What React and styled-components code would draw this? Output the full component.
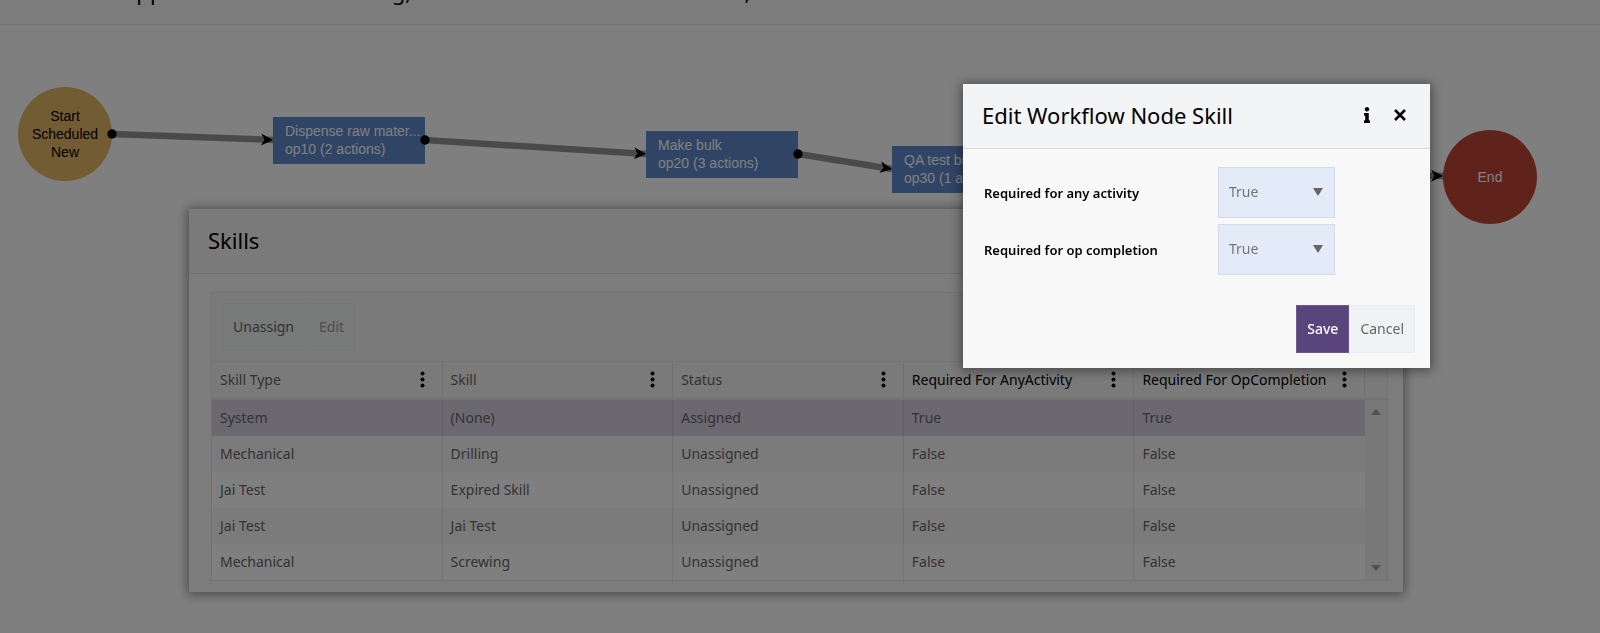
import React from "react";
import styled, { createGlobalStyle } from "styled-components";
import { FaInfo } from "react-icons/fa";

const GlobalStyle = createGlobalStyle`
  * {
    box-sizing: border-box;
  }
  body {
    margin: 0;
    background-color: #ffffff;
    font-family: "Noto Sans", "Open Sans", sans-serif;
    font-size: 14px;
    color: #666666;
  }
  button,
  select {
    font-family: inherit;
  }
`;

const Page = styled.div`
  position: relative;
  display: flex;
  flex-direction: column;
  min-height: 100vh;
  overflow: hidden;
`;

const StatusBar = styled.header`
  display: flex;
  align-items: flex-end;
  height: 25px;
  padding-bottom: 17px;
  background-color: #f8f8f8;
  border-bottom: 1px solid #e6e6e6;
  overflow: hidden;
`;

const StatusText = styled.div`
  font-size: 22px;
  line-height: 32px;
  color: #000000;
  white-space: nowrap;
`;

const Canvas = styled.main`
  position: relative;
  flex: 1;
`;

const Links = styled.svg`
  position: absolute;
  top: 0;
  left: 0;
  width: 100%;
  height: 100%;
`;

const Node = styled.div`
  position: absolute;
  display: flex;
  flex-direction: column;
  justify-content: center;
  font-family: "Liberation Sans", Arial, sans-serif;
  font-size: 14px;
  line-height: 18px;
`;

const RoundNode = styled(Node)`
  align-items: center;
  width: 94px;
  height: 94px;
  border-radius: 50%;
  color: ${(props) => (props.$end ? "#ffffff" : "#000000")};
  background-color: ${(props) => (props.$end ? "#c04638" : "#e4b866")};
`;

const StepNode = styled(Node)`
  width: 152px;
  height: 47px;
  padding: 0 0 1px 12px;
  color: #ffffff;
  background-color: #608acc;
  white-space: nowrap;
`;

const Panel = styled.section`
  position: absolute;
  top: 209px;
  left: 189px;
  right: 197px;
  background-color: #f8f8f8;
  box-shadow: 0 1px 10px 2px rgba(0, 0, 0, 0.4);
`;

const TitleBar = styled.div`
  display: flex;
  align-items: center;
  justify-content: space-between;
  height: 65px;
  padding: 0 19px 2px;
  background-color: ${(props) => (props.$muted ? "#f4f4f4" : "#f3f4f6")};
  border-bottom: 1px solid ${(props) => (props.$muted ? "#e2e2e2" : "#d9dbe0")};
`;

const Title = styled.h2`
  margin: 0;
  font-size: 22px;
  line-height: 30px;
  font-weight: 400;
  color: #000000;
`;

const Grid = styled.div`
  margin: 18px 15px 11px 22px;
  border: 1px solid #e6e6e6;
  background-color: #f5f5f5;
`;

const Toolbar = styled.div`
  display: flex;
  gap: 3px;
  padding: 10px;
`;

const Button = styled.button`
  height: 48px;
  padding: 0 10px 2px;
  font-size: 14px;
  color: ${(props) => (props.$primary ? "#ffffff" : "#666666")};
  font-weight: ${(props) => (props.$primary ? 500 : 400)};
  background-color: ${(props) => (props.$primary ? "#59457c" : "#f1f2f3")};
  border: 1px solid ${(props) => (props.$primary ? "#6b5a8b" : "#ebecee")};
  &:disabled {
    color: #9a9a9a;
  }
`;

const GridBody = styled.div`
  display: flex;
  border-top: 1px solid #e9e9e9;
`;

const Table = styled.table`
  width: 100%;
  table-layout: fixed;
  border-collapse: separate;
  border-spacing: 0;
`;

const HeadCell = styled.th`
  height: 38px;
  padding: 0 17px 2px 8px;
  font-size: 14px;
  font-weight: 400;
  text-align: left;
  white-space: nowrap;
  color: ${(props) => (props.$strong ? "#000000" : "#666666")};
  border-right: 1px solid #e2e2e2;
  border-bottom: 2px solid #e2e2e2;
`;

const HeadContent = styled.div`
  display: flex;
  align-items: center;
  justify-content: space-between;
`;

const MenuButton = styled.button`
  display: flex;
  padding: 0;
  border: none;
  background: none;
`;

const Row = styled.tr`
  background-color: ${(props) => (props.$selected ? "#d6d0e0" : "#ffffff")};
  &:nth-child(even) {
    background-color: #f6f6f6;
  }
`;

const Cell = styled.td`
  height: 36px;
  padding: 0 8px 2px;
  border-right: 1px solid ${(props) => (props.$last ? "transparent" : "rgba(0, 0, 0, 0.08)")};
`;

const ScrollColumn = styled.div`
  display: flex;
  flex-direction: column;
  flex-shrink: 0;
  width: 22px;
`;

const ScrollHead = styled.div`
  height: 38px;
  border-bottom: 2px solid #e2e2e2;
`;

const ScrollTrack = styled.div`
  flex: 1;
  display: flex;
  flex-direction: column;
  align-items: center;
  justify-content: space-between;
  padding: 9px 0;
  background-color: #f1f1f1;
`;

const Backdrop = styled.div`
  position: fixed;
  inset: 0;
  background-color: rgba(0, 0, 0, 0.5);
`;

const Dialog = styled.form`
  position: absolute;
  top: 84px;
  right: 170px;
  width: 467px;
  background-color: #f8f8f8;
  box-shadow: 0 1px 10px 2px rgba(0, 0, 0, 0.4);
`;

const DialogIcons = styled.div`
  display: flex;
  align-items: center;
  gap: 19px;
  padding-right: 5px;
`;

const IconButton = styled.button`
  display: flex;
  padding: 0;
  border: none;
  background: none;
  color: #000000;
`;

const Fields = styled.div`
  display: flex;
  flex-direction: column;
  gap: 6px;
  padding: 18px 21px 0;
`;

const Field = styled.div`
  display: grid;
  grid-template-columns: 234px 117px;
  align-items: center;
`;

const Label = styled.label`
  font-size: 13px;
  font-weight: 600;
  color: #000000;
`;

const SelectWrapper = styled.div`
  position: relative;
  svg {
    position: absolute;
    top: 21px;
    right: 12px;
    pointer-events: none;
  }
`;

const Select = styled.select`
  appearance: none;
  width: 100%;
  height: 51px;
  padding: 0 10px 2px;
  font-size: 14px;
  color: #757575;
  background-color: #e4ebf8;
  border: 1px solid #d3daea;
  border-radius: 0;
`;

const Footer = styled.div`
  display: flex;
  justify-content: flex-end;
  padding: 30px 15px 15px;
`;

const steps = [
  { left: 273, top: 92, name: "Dispense raw mater...", detail: "op10 (2 actions)" },
  { left: 646, top: 106, name: "Make bulk", detail: "op20 (3 actions)" },
  { left: 892, top: 121, name: "QA test bulk", detail: "op30 (1 actions)" },
];

const links = [
  { x1: 112, y1: 109, x2: 273, y2: 115 },
  { x1: 425, y1: 115, x2: 646, y2: 129 },
  { x1: 798, y1: 129, x2: 892, y2: 144 },
  { x1: 1044, y1: 144, x2: 1443, y2: 151 },
];

const columns = [
  { name: "Skill Type" },
  { name: "Skill" },
  { name: "Status" },
  { name: "Required For AnyActivity", strong: true },
  { name: "Required For OpCompletion", strong: true },
];

const rows = [
  ["System", "(None)", "Assigned", "True", "True"],
  ["Mechanical", "Drilling", "Unassigned", "False", "False"],
  ["Jai Test", "Expired Skill", "Unassigned", "False", "False"],
  ["Jai Test", "Jai Test", "Unassigned", "False", "False"],
  ["Mechanical", "Screwing", "Unassigned", "False", "False"],
];

const Link = ({ x1, y1, x2, y2 }) => {
  const angle = (Math.atan2(y2 - y1, x2 - x1) * 180) / Math.PI;
  return (
    <g>
      <line x1={x1} y1={y1} x2={x2} y2={y2} stroke="#959595" strokeWidth="6.5" />
      <circle cx={x1} cy={y1} r="4.7" fill="#000000" />
      <path
        d="M0 0L-12 -6L-8.5 0L-12 6Z"
        fill="#000000"
        transform={`translate(${x2} ${y2}) rotate(${angle})`}
      />
    </g>
  );
};

const DotsIcon = () => (
  <svg width="5" height="17" viewBox="0 0 5 17">
    <circle cx="2.5" cy="2.5" r="2" />
    <circle cx="2.5" cy="8.5" r="2" />
    <circle cx="2.5" cy="14.5" r="2" />
  </svg>
);

const CloseIcon = () => (
  <svg width="12" height="12" viewBox="0 0 12 12">
    <path d="M1 1L11 11M11 1L1 11" stroke="currentColor" strokeWidth="2.5" />
  </svg>
);

const Triangle = ({ up, color }) => (
  <svg width="10" height={up === undefined ? 8 : 6} viewBox="0 0 10 6" preserveAspectRatio="none">
    <path d={up ? "M0 6L5 0L10 6Z" : "M0 0L5 6L10 0Z"} fill={color} />
  </svg>
);

const SelectField = ({ id, label }) => (
  <Field>
    <Label htmlFor={id}>{label}</Label>
    <SelectWrapper>
      <Select id={id} defaultValue="True">
        <option>True</option>
        <option>False</option>
      </Select>
      <Triangle color="#666666" />
    </SelectWrapper>
  </Field>
);

const SkillsPanel = () => (
  <Panel>
    <TitleBar $muted>
      <Title>Skills</Title>
    </TitleBar>
    <Grid>
      <Toolbar>
        <Button type="button">Unassign</Button>
        <Button type="button" disabled>
          Edit
        </Button>
      </Toolbar>
      <GridBody>
        <Table>
          <thead>
            <tr>
              {columns.map((column) => (
                <HeadCell key={column.name} $strong={column.strong}>
                  <HeadContent>
                    {column.name}
                    <MenuButton type="button" aria-label={`${column.name} menu`}>
                      <DotsIcon />
                    </MenuButton>
                  </HeadContent>
                </HeadCell>
              ))}
            </tr>
          </thead>
          <tbody>
            {rows.map((row, i) => (
              <Row key={i} $selected={i === 0}>
                {row.map((value, j) => (
                  <Cell key={j} $last={j === row.length - 1}>
                    {value}
                  </Cell>
                ))}
              </Row>
            ))}
          </tbody>
        </Table>
        <ScrollColumn>
          <ScrollHead />
          <ScrollTrack>
            <Triangle up={true} color="#a3a3a3" />
            <Triangle up={false} color="#a3a3a3" />
          </ScrollTrack>
        </ScrollColumn>
      </GridBody>
    </Grid>
  </Panel>
);

const SkillDialog = () => (
  <Dialog role="dialog" aria-labelledby="dialog-title">
    <TitleBar>
      <Title id="dialog-title">Edit Workflow Node Skill</Title>
      <DialogIcons>
        <IconButton type="button" aria-label="Info">
          <FaInfo size={16} />
        </IconButton>
        <IconButton type="button" aria-label="Close">
          <CloseIcon />
        </IconButton>
      </DialogIcons>
    </TitleBar>
    <Fields>
      <SelectField id="any-activity" label="Required for any activity" />
      <SelectField id="op-completion" label="Required for op completion" />
    </Fields>
    <Footer>
      <Button type="button" $primary>
        Save
      </Button>
      <Button type="button">Cancel</Button>
    </Footer>
  </Dialog>
);

const App = () => (
  <>
    <GlobalStyle />
    <Page>
      <StatusBar>
        <StatusText>
          tion Status: Approved - Now Processing, Last Actioned at 10/06/2021 AM, Last Saved at 10/06/2021 AM
        </StatusText>
      </StatusBar>
      <Canvas>
        <RoundNode style={{ left: 18, top: 62 }}>
          <span>Start</span>
          <span>Scheduled</span>
          <span>New</span>
        </RoundNode>
        {steps.map((step) => (
          <StepNode key={step.name} style={{ left: step.left, top: step.top }}>
            <span>{step.name}</span>
            <span>{step.detail}</span>
          </StepNode>
        ))}
        <RoundNode $end style={{ left: 1443, top: 105 }}>
          <span>End</span>
        </RoundNode>
        <Links>
          {links.map((link) => (
            <Link key={link.x1} {...link} />
          ))}
        </Links>
      </Canvas>
      <SkillsPanel />
      <Backdrop />
      <SkillDialog />
    </Page>
  </>
);

export default App;
